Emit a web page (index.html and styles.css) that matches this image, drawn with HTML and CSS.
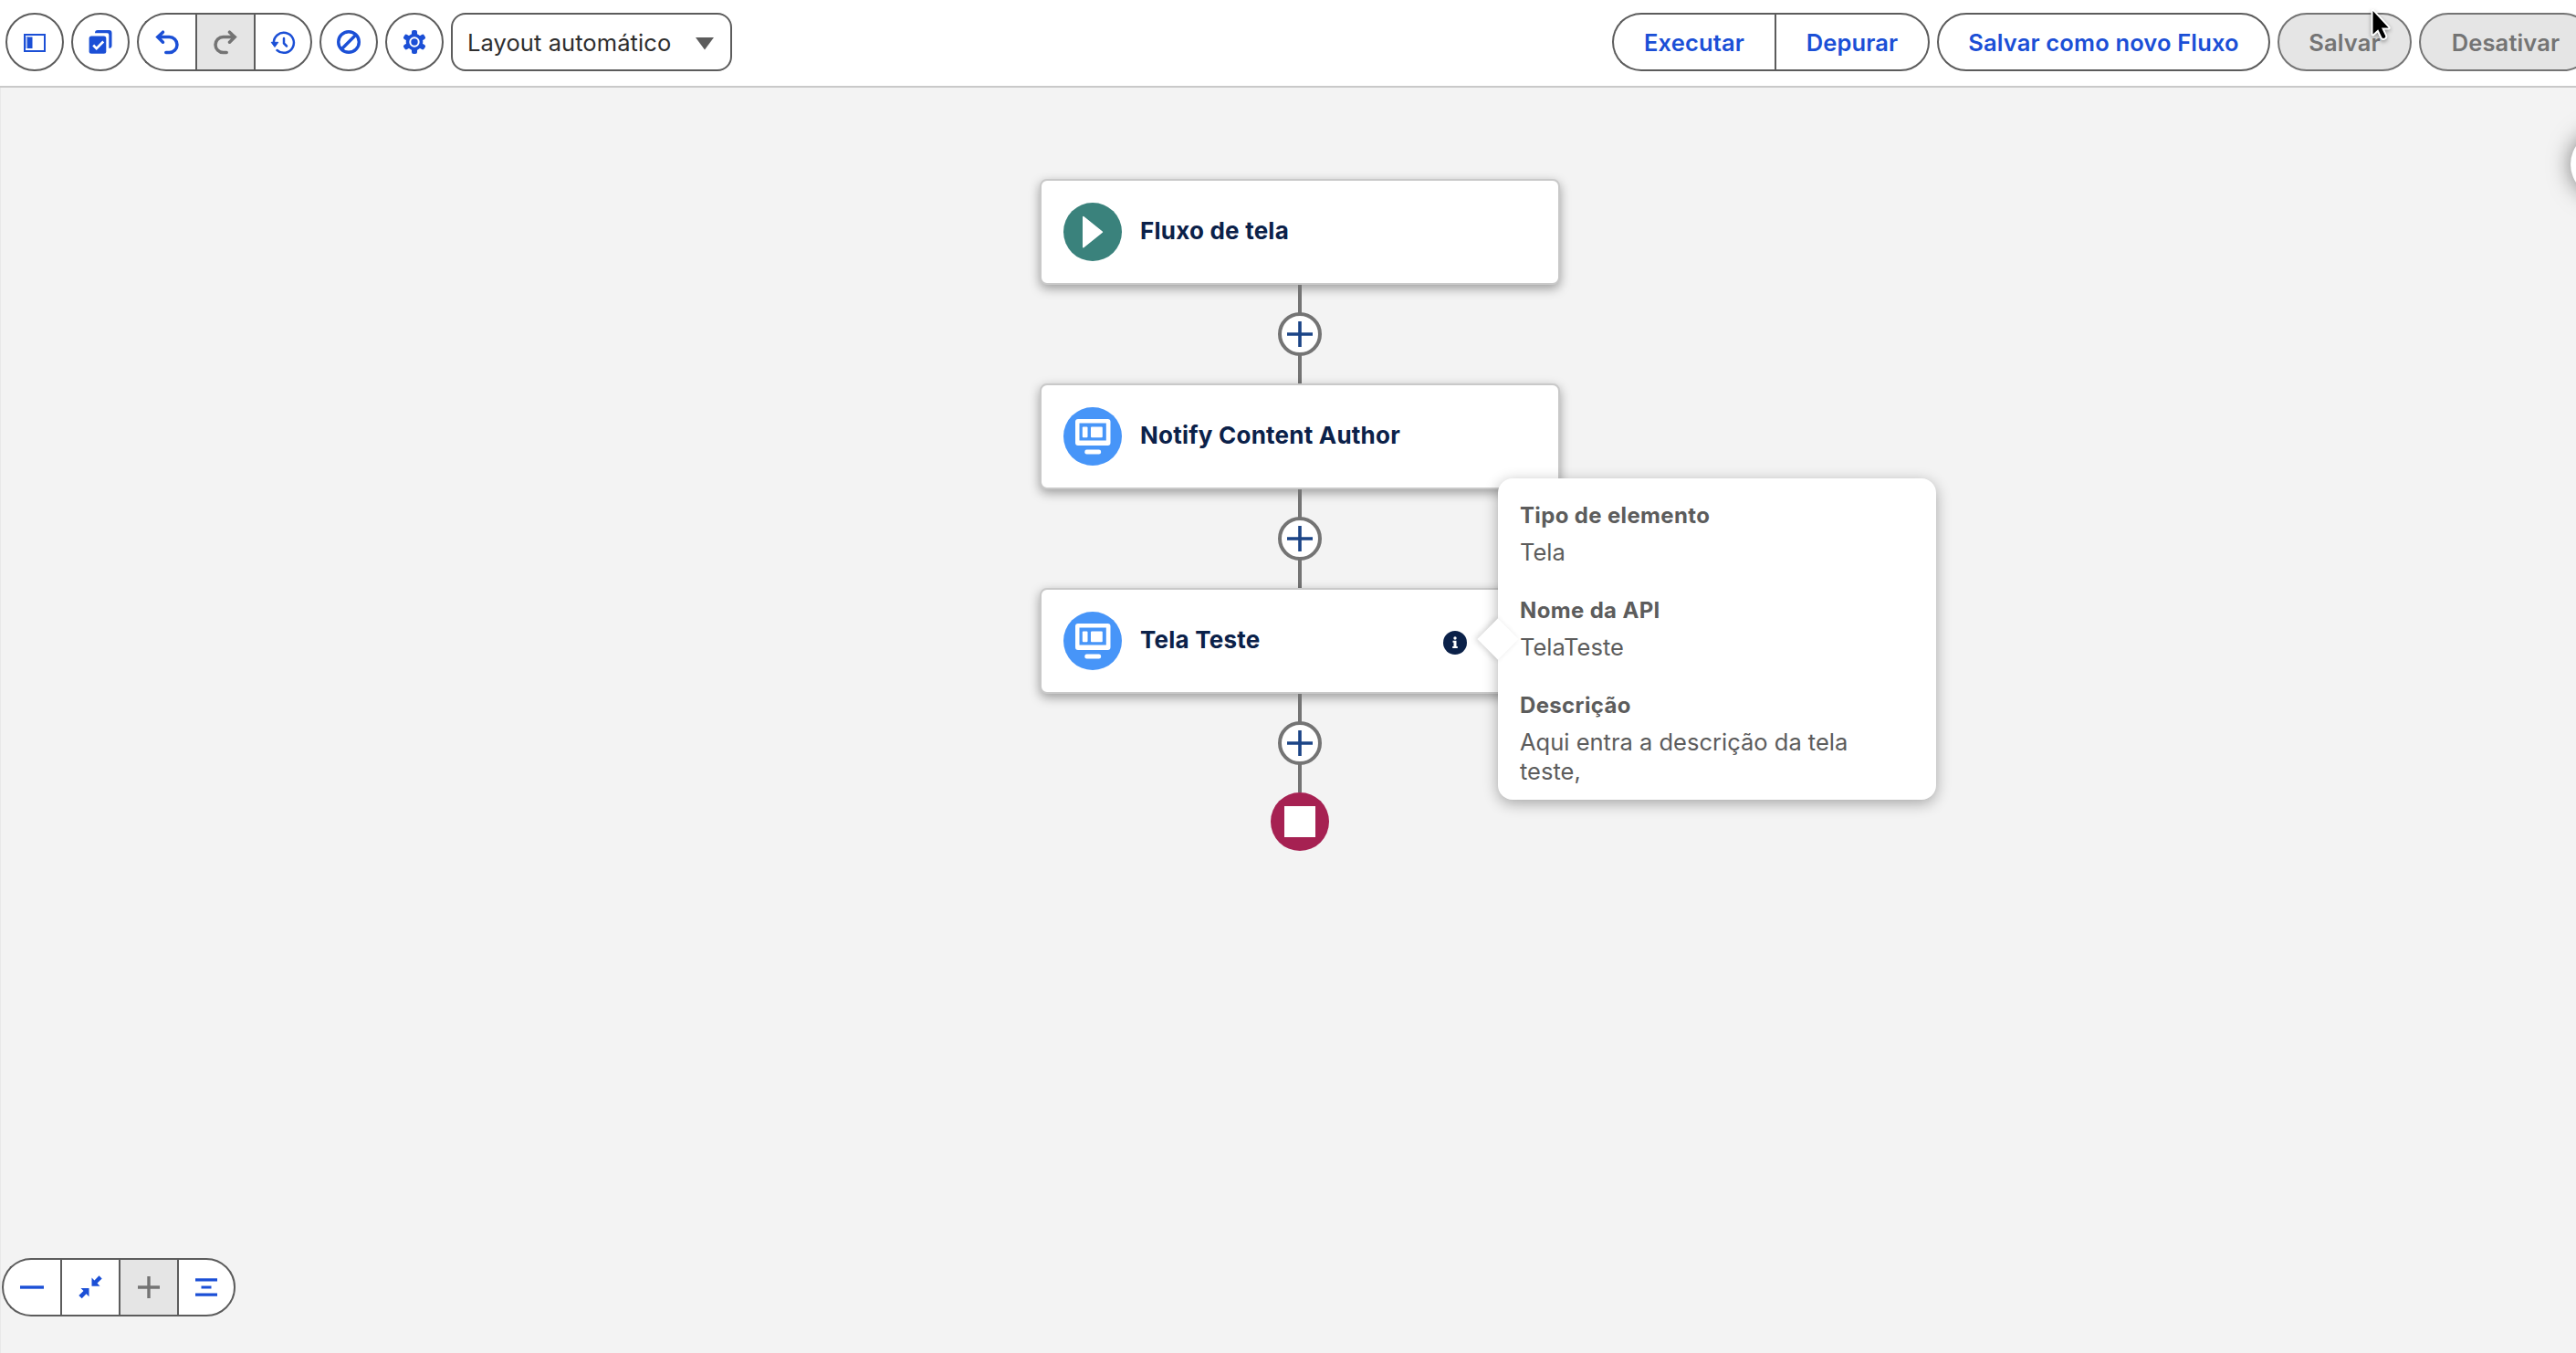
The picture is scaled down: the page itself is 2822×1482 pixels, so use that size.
FILE: index.html
```
<!DOCTYPE html>
<html lang="pt-BR">
<head>
    <meta charset="UTF-8">
    <meta name="viewport" content="width=device-width, initial-scale=1.0">
    <title>Flow Builder</title>
    <link rel="stylesheet" href="styles.css">
</head>
<body>
<svg class="symbols">
    <symbol id="screen" viewBox="0 0 64 64">
        <path fill="#fff" fill-rule="evenodd" d="M16 13h32.500a3 3 0 0 1 3 3v23a3 3 0 0 1-3 3H16a3 3 0 0 1-3-3V16a3 3 0 0 1 3-3zM17.500 17.500V36.500H46.800V17.500z"/>
        <rect x="20.800" y="21.500" width="5.700" height="11.700" rx="1" fill="#fff"/>
        <rect x="30" y="21.500" width="12.800" height="11.700" rx="1" fill="#fff"/>
        <rect x="23.300" y="46.500" width="17.800" height="5" rx="2.200" fill="#fff"/>
    </symbol>
    <symbol id="plus" viewBox="0 0 28 28">
        <path d="M14 0v28M0 14h28" fill="none" stroke="currentColor" stroke-width="3.600"/>
    </symbol>
</svg>

<header class="toolbar">
    <div class="tools">
        <button class="btn round" aria-label="Caixa de ferramentas">
            <svg class="icon" viewBox="0 0 28 28"><rect x="3" y="6" width="22" height="18" fill="none" stroke="currentColor" stroke-width="2"/><rect x="4" y="8" width="3" height="13" fill="currentColor" opacity=".4"/><rect x="6" y="8.500" width="5.500" height="12.500" fill="currentColor"/></svg>
        </button>
        <button class="btn round" aria-label="Selecionar elementos">
            <svg class="icon" viewBox="0 0 28 28"><rect x="1.600" y="7.500" width="18.700" height="19.300" rx="2.500" fill="currentColor"/><path d="M8 4C8 2 9 1 11 1h12.500a3 3 0 0 1 3 3v14c0 2-1 2.800-3.200 2.800V6.500a2 2 0 0 0-2-2.200H8z" fill="currentColor"/><path d="M6.200 17.500l3.500 3.700 7.500-7.700" fill="none" stroke="#fff" stroke-width="2.600"/></svg>
        </button>
        <div class="group">
            <button class="btn" aria-label="Desfazer">
                <svg class="icon" viewBox="0 0 28 28"><path d="M9.500 3.200L3.800 8.600l5.700 5.600M4.500 8.600h12a8.500 8.500 0 0 1 0 17h-3.700" fill="none" stroke="currentColor" stroke-width="3.500" stroke-linecap="round"/></svg>
            </button>
            <button class="btn disabled" aria-label="Refazer">
                <svg class="icon" viewBox="0 0 28 28"><path d="M18.500 3.200l5.700 5.400-5.700 5.600M23.500 8.600h-12a8.500 8.500 0 0 0 0 17h3.700" fill="none" stroke="currentColor" stroke-width="3.500" stroke-linecap="round"/></svg>
            </button>
            <button class="btn" aria-label="Histórico">
                <svg class="icon" viewBox="0 0 28 28"><path d="M3.900 15.500a11 11 0 1 1 3.600 7.500" fill="none" stroke="currentColor" stroke-width="2.500" stroke-linecap="round"/><path d="M1.200 14.300h7.600L5 19.500z" fill="currentColor" stroke="currentColor" stroke-linejoin="round"/><path d="M15 10v5.500l3 3" fill="none" stroke="currentColor" stroke-width="2.500" stroke-linecap="round"/></svg>
            </button>
        </div>
        <button class="btn round" aria-label="Ocultar erros">
            <svg class="icon" viewBox="0 0 28 28"><circle cx="14" cy="14" r="11.300" fill="none" stroke="currentColor" stroke-width="3.400"/><path d="M22 6L6 22" stroke="currentColor" stroke-width="3.400"/></svg>
        </button>
        <button class="btn round" aria-label="Configurações">
            <svg class="icon" viewBox="0 0 28 28">
                <g fill="currentColor"><circle cx="14" cy="14" r="9.300"/>
                    <rect x="11" y="1" width="6" height="26" rx="2"/>
                    <rect x="11" y="1" width="6" height="26" rx="2" transform="rotate(60 14 14)"/>
                    <rect x="11" y="1" width="6" height="26" rx="2" transform="rotate(120 14 14)"/></g>
                <circle cx="14" cy="14" r="4.700" fill="none" stroke="#fff" stroke-width="2"/>
            </svg>
        </button>
        <div class="select">
            <span>Layout automático</span>
            <svg class="caret" viewBox="0 0 20 14"><path d="M0 0h20L10 13.500z" fill="#5c5c5c"/></svg>
        </div>
    </div>
    <div class="actions">
        <div class="group">
            <button class="btn run">Executar</button>
            <button class="btn debug">Depurar</button>
        </div>
        <button class="btn pill save-as">Salvar como novo Fluxo</button>
        <button class="btn pill save disabled">Salvar</button>
        <button class="btn pill deactivate disabled">Desativar</button>
    </div>
</header>

<main class="canvas">
    <div class="flow">
        <div class="node">
            <svg class="node-icon start" viewBox="0 0 64 64"><path d="M21.800 15.700v33l20.500-16.500z" fill="#fff" stroke="#fff" stroke-width="1.600" stroke-linejoin="round"/></svg>
            <span class="node-title">Fluxo de tela</span>
        </div>
        <div class="connector"><span class="add"><svg><use href="#plus"/></svg></span></div>
        <div class="node">
            <svg class="node-icon screen"><use href="#screen"/></svg>
            <span class="node-title">Notify Content Author</span>
        </div>
        <div class="connector"><span class="add"><svg><use href="#plus"/></svg></span></div>
        <div class="node">
            <svg class="node-icon screen"><use href="#screen"/></svg>
            <span class="node-title">Tela Teste</span>
            <svg class="info" viewBox="0 0 26 26"><circle cx="13" cy="13" r="13" fill="#0b2149"/><circle cx="13" cy="8" r="1.700" fill="#fff"/><path d="M10.500 10.800h4v6.200h1.300v1.900h-5.600V17h1.300v-4.300h-1z" fill="#fff"/></svg>
            <div class="popover">
                <dl>
                    <dt>Tipo de elemento</dt>
                    <dd>Tela</dd>
                    <dt>Nome da API</dt>
                    <dd>TelaTeste</dd>
                    <dt>Descrição</dt>
                    <dd>Aqui entra a descrição da tela<br>teste,</dd>
                </dl>
            </div>
        </div>
        <div class="connector"><span class="add"><svg><use href="#plus"/></svg></span></div>
        <svg class="end" viewBox="0 0 64 64"><circle cx="32" cy="32" r="32" fill="#a62152"/><rect x="15" y="15" width="34" height="34" fill="#fff"/></svg>
    </div>

    <div class="group zoom">
        <button class="btn" aria-label="Reduzir">
            <svg class="icon" viewBox="0 0 28 28"><path d="M1 14h26" stroke="currentColor" stroke-width="3.400"/></svg>
        </button>
        <button class="btn" aria-label="Ajustar">
            <svg class="icon" viewBox="0 0 28 28"><path d="M15.500 3.500l3 3 5-5.200 3.200 3.200-5.200 5 3 3.200h-9zM12.500 15v9.200l-3-3-4.800 5-3.400-3.200 5.200-5-3-3z" fill="currentColor"/></svg>
        </button>
        <button class="btn disabled" aria-label="Ampliar">
            <svg class="icon" viewBox="0 0 28 28"><path d="M14 2v24M2 14h24" stroke="currentColor" stroke-width="3.400"/></svg>
        </button>
        <button class="btn" aria-label="Centralizar">
            <svg class="icon" viewBox="0 0 28 28"><path d="M2 5.800h24M8.500 14h11M2 22.200h24" stroke="currentColor" stroke-width="3.200"/></svg>
        </button>
    </div>
    <div class="side-toggle"></div>
</main>

<svg class="cursor" viewBox="0 0 24 38"><path d="M3.500 4v25.500l5.700-5.300 4.300 9c1.200 1.600 4.200.4 3.800-1.600L13 22.500h7.700z" fill="#000" stroke="#fff" stroke-width="4" stroke-linejoin="round" paint-order="stroke"/></svg>
</body>
</html>
```

FILE: styles.css
```
* {
    box-sizing: border-box;
}

body {
    margin: 0;
    height: 100vh;
    display: flex;
    flex-direction: column;
    overflow: hidden;
    font-family: Inter, "Liberation Sans", sans-serif;
    font-size: 26px;
    background-color: #f3f3f3;
}

.symbols {
    display: none;
}

/* Toolbar */
.toolbar {
    display: flex;
    flex: none;
    justify-content: space-between;
    height: 96px;
    padding: 14px 0 0 6px;
    background-color: #fff;
    border-bottom: 2px solid #c9c9c9;
}

.tools,
.actions {
    display: flex;
    gap: 8px;
}

.actions {
    margin-right: -18px;
}

.btn {
    display: flex;
    flex: none;
    align-items: center;
    justify-content: center;
    height: 64px;
    padding: 0;
    border: 2px solid #5c5c5c;
    background-color: #fff;
    color: #1b4fd6;
    font: 600 25.5px/1 Inter, "Liberation Sans", sans-serif;
    letter-spacing: 0.15px;
    white-space: nowrap;
}

.btn.disabled {
    background-color: #e5e5e5;
    color: #747474;
}

.round {
    width: 64px;
    border-radius: 50%;
}

.pill {
    border-radius: 32px;
}

.pill.disabled {
    border-color: #747474;
}

.group {
    display: flex;
}

.group .btn {
    width: 64px;
    border-right-width: 0;
}

.group .btn:first-child {
    border-radius: 32px 0 0 32px;
}

.group .btn:last-child {
    border-right-width: 2px;
    border-radius: 0 32px 32px 0;
}

.actions .btn {
    padding-top: 2px;
}

.icon {
    width: 28px;
    height: 28px;
}

.select {
    display: flex;
    align-items: center;
    justify-content: space-between;
    width: 308px;
    height: 64px;
    padding: 0 18px 0 16px;
    border: 2px solid #5c5c5c;
    border-radius: 16px;
    color: #2e2e2e;
    font-size: 25.5px;
    letter-spacing: 0.08px;
}

.caret {
    width: 20px;
    height: 14px;
    margin-top: 4px;
}

.actions .group .run {
    width: 178px;
}

.actions .group .debug {
    width: 170px;
}

.save-as {
    width: 365px;
}

.save {
    width: 147px;
}

.deactivate {
    width: 190px;
}

/* Canvas */
.canvas {
    position: relative;
    flex: 1;
    display: flex;
    flex-direction: column;
    justify-content: space-between;
    padding: 100px 0 40px;
    border-left: 1px solid #e9e9e9;
}

.flow {
    display: flex;
    flex-direction: column;
    align-items: center;
    width: 570px;
    margin-left: 1138px;
}

.node {
    position: relative;
    display: flex;
    align-items: center;
    width: 570px;
    height: 116px;
    padding: 0 24px;
    background-color: #fff;
    border: 2px solid #c9c9c9;
    border-radius: 8px;
    box-shadow: 0 4px 12px rgba(0, 0, 0, 0.36);
}

.node-icon {
    width: 64px;
    height: 64px;
    border-radius: 50%;
}

.start {
    background-color: #3a827c;
}

.screen {
    background-color: #4795f8;
}

.node-title {
    margin-left: 20px;
    margin-top: -4px;
    color: #0b2149;
    font-weight: 700;
    font-size: 26px;
    letter-spacing: 0.22px;
}

.info {
    width: 26px;
    height: 26px;
    margin: 4px 76px 0 auto;
}

.connector {
    position: relative;
    display: flex;
    align-items: center;
    justify-content: center;
    height: 108px;
    width: 48px;
    background: linear-gradient(#747474, #747474) center / 4px 100% no-repeat;
}

.add {
    display: flex;
    align-items: center;
    justify-content: center;
    width: 48px;
    height: 48px;
    border: 4px solid #747474;
    border-radius: 50%;
    background-color: #fff;
    color: #1b4486;
}

.add svg {
    width: 28px;
    height: 28px;
}

.end {
    width: 64px;
    height: 64px;
}

/* Element details */
.popover {
    position: absolute;
    z-index: 2;
    left: 500px;
    top: -122px;
    width: 480px;
    height: 352px;
    padding: 25px 24px;
    background-color: #fff;
    border-radius: 16px;
    color: #5c5c5c;
    box-shadow: 0 4px 16px rgba(0, 0, 0, 0.32);
}

.popover::before {
    content: "";
    position: absolute;
    left: -16px;
    top: 160px;
    width: 32px;
    height: 32px;
    background-color: #fff;
    transform: rotate(45deg);
    box-shadow: -2px 2px 6px rgba(0, 0, 0, 0.16);
}

.popover dl {
    position: relative;
    margin: 0;
}

.popover dt {
    font-size: 24px;
    font-weight: 700;
    line-height: 32px;
    letter-spacing: 0.35px;
}

.popover dd {
    margin: 8px 0 32px;
    font-size: 25.5px;
    line-height: 32px;
}

/* Zoom controls */
.zoom {
    margin-left: 1px;
}

.side-toggle {
    position: absolute;
    right: -66px;
    top: 48px;
    width: 72px;
    height: 72px;
    border-radius: 50%;
    background-color: #fff;
    box-shadow: 0 0 24px rgba(0, 0, 0, 0.5);
}

.cursor {
    position: absolute;
    left: 2596px;
    top: 8px;
    width: 24px;
    height: 38px;
    filter: drop-shadow(0 2px 2px rgba(0, 0, 0, 0.35));
}
```
